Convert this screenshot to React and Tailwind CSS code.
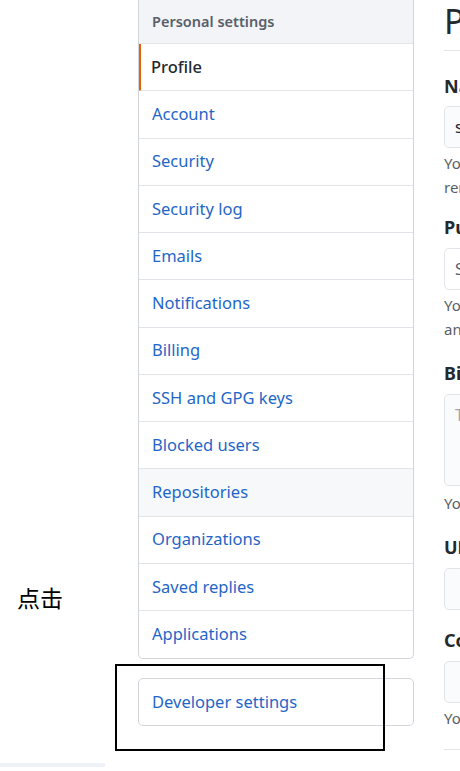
import React from "react";

const items = [
  { label: "Account" },
  { label: "Security" },
  { label: "Security log" },
  { label: "Emails" },
  { label: "Notifications" },
  { label: "Billing" },
  { label: "SSH and GPG keys" },
  { label: "Blocked users" },
  { label: "Repositories", grey: true },
  { label: "Organizations" },
  { label: "Saved replies" },
  { label: "Applications", last: true },
];

export default function App() {
  return (
    <div
      className="relative w-[460px] h-[771px] overflow-hidden bg-white flex"
      style={{ fontFamily: '"Noto Sans", "Open Sans", "Noto Sans CJK SC", sans-serif' }}
    >
      {/* left annotation column */}
      <div className="w-[138px] shrink-0 flex flex-col">
        <div
          className="mt-[582px] pl-[17px] text-[23px] leading-[30px] text-black"
          style={{ fontFamily: '"Noto Sans CJK SC", sans-serif' }}
        >
          点击
        </div>
        <div className="mt-auto mb-[4px] h-[4px] w-[105px] bg-[#eef1f6]" />
      </div>

      {/* menu column */}
      <div className="w-[276px] shrink-0 flex flex-col">
        <div className="border border-t-0 border-[#d1d5da] rounded-b-[5px] overflow-hidden">
          <div className="h-[44px] flex items-center px-[13px] bg-[#f3f4f7] border-b border-[#e1e4e8] text-[14.5px] font-semibold text-[#586069]">
            Personal settings
          </div>
          <div className="h-[47.25px] flex items-center pl-[10px] border-l-[3px] -ml-px border-l-[#e36209] border-b border-[#e1e4e8] text-[16.5px] font-medium text-[#24292e]">
            Profile
          </div>
          {items.map((it) => (
            <div
              key={it.label}
              className={
                "h-[47.25px] flex items-center pl-[13px] text-[16.5px] text-[#1f66c8] " +
                (it.last ? "" : "border-b border-[#e1e4e8] ") +
                (it.grey ? "bg-[#f6f8fa]" : "")
              }
            >
              {it.label}
            </div>
          ))}
        </div>
        <div className="mt-[19px] h-[48px] flex items-center pl-[13px] border border-[#d1d5da] rounded-[5px] text-[16.5px] text-[#1f66c8]">
          Developer settings
        </div>
      </div>

      {/* right content column */}
      <div className="ml-[30px] w-[320px] shrink-0 flex flex-col text-[#24292e]">
        <div className="h-[51px] border-b border-[#e1e4e8] text-[34px] leading-[42px] whitespace-nowrap">
          Public profile
        </div>
        <div className="mt-[24px] text-[18px] font-bold leading-[22px] whitespace-nowrap">Name</div>
        <div className="mt-[9px] h-[42px] border border-[#e1e4e8] rounded-[5px] bg-[#fafbfc] flex items-center pl-[10px] text-[16px] text-[#24292e]">
          sunny
        </div>
        <div className="mt-[3px] text-[15px] leading-[24px] text-[#586069] whitespace-nowrap">
          <div>Your name may appear around GitHub where you</div>
          <div>remove it at any time.</div>
        </div>
        <div className="mt-[17px] text-[18px] font-bold leading-[22px] whitespace-nowrap">Public email</div>
        <div className="mt-[10px] h-[42px] border border-[#e1e4e8] rounded-[5px] bg-white flex items-center pl-[10px] text-[16px] text-[#586069]">
          Select a verified email to display
        </div>
        <div className="mt-[3px] text-[15px] leading-[24px] text-[#586069] whitespace-nowrap">
          <div>You can manage verified email addresses in your</div>
          <div>and more.</div>
        </div>
        <div className="mt-[21px] text-[18px] font-bold leading-[22px] whitespace-nowrap">Bio</div>
        <div className="mt-[10px] h-[92px] border border-[#e1e4e8] rounded-[5px] bg-[#fafbfc] pl-[10px] pt-[8px] text-[16px] text-[#a0a6ad]">
          Tell us a little bit about yourself
        </div>
        <div className="mt-[5px] text-[15px] leading-[24px] text-[#586069] whitespace-nowrap">
          You can @mention other users and organizations
        </div>
        <div className="mt-[21px] text-[18px] font-bold leading-[22px] whitespace-nowrap">URL</div>
        <div className="mt-[10px] h-[42px] border border-[#e1e4e8] rounded-[5px] bg-[#fafbfc]" />
        <div className="mt-[19px] text-[18px] font-bold leading-[22px] whitespace-nowrap">Company</div>
        <div className="mt-[10px] h-[42px] border border-[#e1e4e8] rounded-[5px] bg-[#fafbfc]" />
        <div className="mt-[3px] text-[15px] leading-[24px] text-[#586069] whitespace-nowrap">
          You can @mention your company's GitHub organization
        </div>
        <div className="mt-[19px] border-b border-[#e1e4e8]" />
      </div>

      {/* annotation rectangle */}
      <div className="absolute left-[115px] top-[664px] w-[270px] h-[87px] border-2 border-black" />
    </div>
  );
}
